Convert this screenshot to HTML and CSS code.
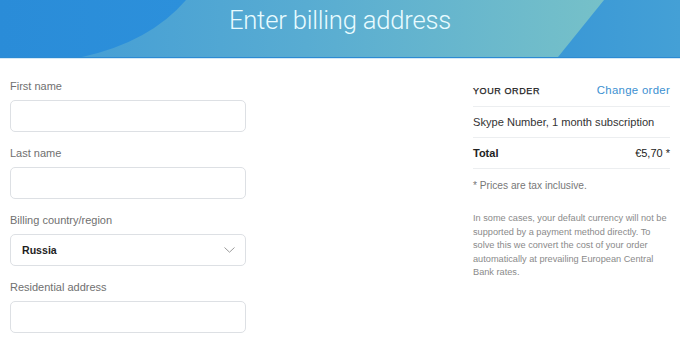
FILE: index.html
```html
<!DOCTYPE html>
<html lang="en">
<head>
<meta charset="utf-8">
<title>Enter billing address</title>
<link rel="stylesheet" href="styles.css">
</head>
<body>
<header class="hero">
  <svg class="hero-bg" viewBox="0 0 680 57" preserveAspectRatio="none" aria-hidden="true">
    <defs>
      <linearGradient id="mid" x1="0" y1="0" x2="1" y2="0">
        <stop offset="0" stop-color="#3f9ad6"/>
        <stop offset="0.45" stop-color="#58acd2"/>
        <stop offset="1" stop-color="#7ec6c6"/>
      </linearGradient>
      <linearGradient id="left" x1="0" y1="0" x2="1" y2="0">
        <stop offset="0" stop-color="#2a8cd8"/>
        <stop offset="1" stop-color="#2c90db"/>
      </linearGradient>
      <linearGradient id="right" x1="0" y1="0" x2="1" y2="0">
        <stop offset="0" stop-color="#3a98d6"/>
        <stop offset="1" stop-color="#44a0d6"/>
      </linearGradient>
    </defs>
    <rect x="0" y="0" width="680" height="57" fill="url(#mid)"/>
    <path d="M0 0 H186 Q150 42 82 57 H0 Z" fill="url(#left)"/>
    <path d="M604 0 H680 V57 H558 Z" fill="url(#right)"/>
  </svg>
  <h1 class="hero-title">Enter billing address</h1>
</header>

<main class="page">
  <form class="billing">
    <div class="field">
      <label class="field-label">First name</label>
      <div class="input"></div>
    </div>
    <div class="field">
      <label class="field-label">Last name</label>
      <div class="input"></div>
    </div>
    <div class="field">
      <label class="field-label">Billing country/region</label>
      <div class="input select">
        <span class="select-value">Russia</span>
        <svg class="chevron" width="11" height="6" viewBox="0 0 11 6" aria-hidden="true">
          <path d="M0.5 0.5 L5.5 5.2 L10.5 0.5" fill="none" stroke="#9a9a9a" stroke-width="1"/>
        </svg>
      </div>
    </div>
    <div class="field">
      <label class="field-label">Residential address</label>
      <div class="input"></div>
    </div>
  </form>

  <aside class="order">
    <div class="order-head">
      <span class="order-title">YOUR ORDER</span>
      <a class="order-change" href="#">Change order</a>
    </div>
    <div class="order-row">
      <span>Skype Number, 1 month subscription</span>
    </div>
    <div class="order-row order-total">
      <span class="total-label">Total</span>
      <span class="total-value">€5,70 *</span>
    </div>
    <p class="order-note">* Prices are tax inclusive.</p>
    <p class="order-info">In some cases, your default currency will not be supported by a payment method directly. To solve this we convert the cost of your order automatically at prevailing European Central Bank rates.</p>
  </aside>
</main>
</body>
</html>
```

FILE: styles.css
```css
* {
  box-sizing: border-box;
}

html, body {
  margin: 0;
  padding: 0;
  background: #ffffff;
}

body {
  font-family: "Liberation Sans", Arial, sans-serif;
  color: #333333;
  width: 680px;
  height: 337px;
  overflow: hidden;
}

.hero {
  position: relative;
  height: 58px;
  border-bottom: 1px solid #2c8ad3;
  box-shadow: 0 1px 0 #d4e9f6;
  overflow: hidden;
}

.hero-bg {
  position: absolute;
  left: 0;
  top: 0;
  width: 680px;
  height: 57px;
  display: block;
}

.hero-title {
  position: relative;
  margin: 0;
  padding-top: 5px;
  text-align: center;
  font-family: Roboto, "Liberation Sans", sans-serif;
  font-weight: 300;
  font-size: 25.6px;
  line-height: 31px;
  color: #e8fbff;
  letter-spacing: -0.2px;
}

.page {
  display: flex;
  justify-content: space-between;
  padding: 21px 10px 0 10px;
}

.billing {
  width: 236px;
  margin: 0;
}

.field {
  margin-bottom: 14px;
}

.field-label {
  display: block;
  font-size: 11px;
  line-height: 14px;
  color: #707070;
  margin-bottom: 7px;
}

.input {
  height: 32px;
  border: 1px solid #dde0e4;
  border-radius: 5px;
  background: #ffffff;
}

.select {
  display: flex;
  align-items: center;
  justify-content: space-between;
  padding: 0 10px 0 11px;
}

.select-value {
  font-size: 10.6px;
  font-weight: bold;
  color: #1e1e1e;
}

.chevron {
  display: block;
}

.order {
  width: 197px;
}

.order-head {
  display: flex;
  justify-content: space-between;
  align-items: baseline;
  padding: 4px 0 8px;
  line-height: 14px;
  border-bottom: 1px solid #eceef0;
}

.order-title {
  font-size: 9px;
  letter-spacing: 0.6px;
  color: #222222;
  -webkit-text-stroke: 0.25px #222222;
}

.order-change {
  font-size: 11.4px;
  letter-spacing: 0.3px;
  color: #3b8fd1;
  text-decoration: none;
}

.order-row {
  display: flex;
  justify-content: space-between;
  padding: 8px 0;
  line-height: 14px;
  font-size: 11.1px;
  color: #333333;
  border-bottom: 1px solid #eceef0;
}

.order-total {
  font-size: 11px;
}

.total-label {
  font-weight: bold;
  color: #222222;
}

.total-value {
  color: #222222;
}

.order-note {
  margin: 10px 0 0;
  font-size: 10.2px;
  line-height: 14px;
  color: #777777;
}

.order-info {
  margin: 19px 0 0;
  font-size: 9.2px;
  line-height: 13.6px;
  color: #8a8a8a;
}
```
